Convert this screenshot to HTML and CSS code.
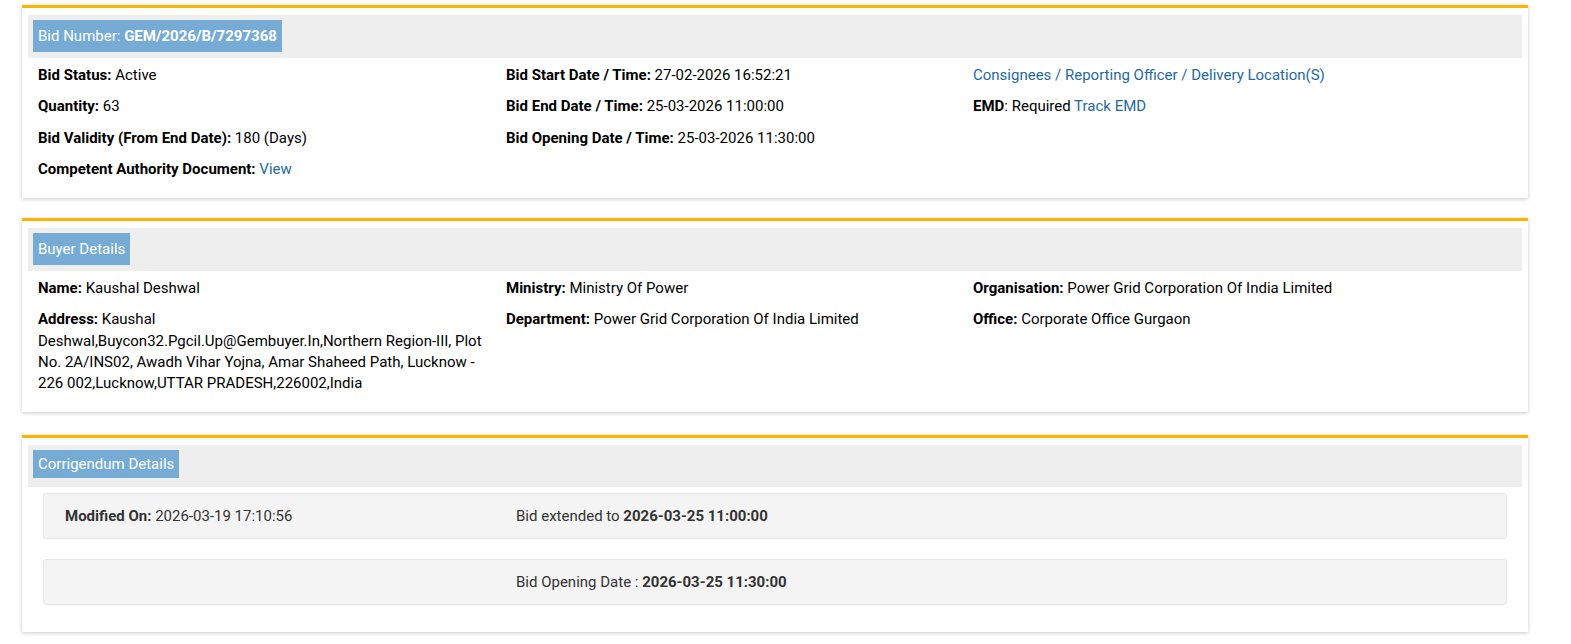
FILE: index.html
```html
<!DOCTYPE html>
<html lang="en">
<head>
    <meta charset="UTF-8">
    <meta name="viewport" content="width=device-width, initial-scale=1.0">
    <title>Bid Details</title>
    <link rel="stylesheet" href="styles.css">
</head>
<body>
<div class="page">

    <div class="card">
        <div class="card-head">
            <span class="tag">Bid Number: <b>GEM/2026/B/7297368</b></span>
        </div>
        <div class="grid">
            <div class="col">
                <div class="item"><b>Bid Status:</b> Active</div>
                <div class="item"><b>Quantity:</b> 63</div>
                <div class="item"><b>Bid Validity (From End Date):</b> 180 (Days)</div>
                <div class="item"><b>Competent Authority Document:</b> <a href="#">View</a></div>
            </div>
            <div class="col">
                <div class="item"><b>Bid Start Date / Time:</b> 27-02-2026 16:52:21</div>
                <div class="item"><b>Bid End Date / Time:</b> 25-03-2026 11:00:00</div>
                <div class="item"><b>Bid Opening Date / Time:</b> 25-03-2026 11:30:00</div>
            </div>
            <div class="col">
                <div class="item"><a href="#">Consignees / Reporting Officer / Delivery Location(S)</a></div>
                <div class="item"><b>EMD</b>: Required <a href="#">Track EMD</a></div>
            </div>
        </div>
    </div>

    <div class="card">
        <div class="card-head">
            <span class="tag">Buyer Details</span>
        </div>
        <div class="grid">
            <div class="col">
                <div class="item"><b>Name:</b> Kaushal Deshwal</div>
                <div class="item"><b>Address:</b> Kaushal Deshwal,Buycon32.Pgcil.Up@Gembuyer.In,Northern Region-III, Plot No. 2A/INS02, Awadh Vihar Yojna, Amar Shaheed Path, Lucknow - 226 002,Lucknow,UTTAR PRADESH,226002,India</div>
            </div>
            <div class="col">
                <div class="item"><b>Ministry:</b> Ministry Of Power</div>
                <div class="item"><b>Department:</b> Power Grid Corporation Of India Limited</div>
            </div>
            <div class="col">
                <div class="item"><b>Organisation:</b> Power Grid Corporation Of India Limited</div>
                <div class="item"><b>Office:</b> Corporate Office Gurgaon</div>
            </div>
        </div>
    </div>

    <div class="card last">
        <div class="card-head small">
            <span class="tag">Corrigendum Details</span>
        </div>
        <div class="wells">
            <div class="well">
                <div><b>Modified On:</b> 2026-03-19 17:10:56</div>
                <div>Bid extended to <b>2026-03-25 11:00:00</b></div>
            </div>
            <div class="well">
                <div></div>
                <div>Bid Opening Date : <b>2026-03-25 11:30:00</b></div>
            </div>
        </div>
    </div>

</div>
</body>
</html>
```

FILE: styles.css
```css
body {
    margin: 0;
    padding: 0;
    font-family: Roboto, "Liberation Sans", Arial, sans-serif;
    font-size: 15px;
    color: #000;
    background: #fff;
}

.page {
    padding: 5px 0 0 22px;
}

.card {
    width: 1506px;
    box-sizing: border-box;
    border-top: 3px solid #fbb400;
    background: #fff;
    box-shadow: 0 1px 4px rgba(0, 0, 0, 0.22);
    padding: 7px 6px 7px 6px;
    margin-bottom: 20px;
}

.card.last {
    margin-top: 23px;
    padding-bottom: 7px;
}

.card-head {
    background: #eeeeee;
    padding: 5px 5px 6px 5px;
}

.card-head.small {
    padding-bottom: 9px;
}

.tag {
    display: inline-block;
    background: #75abd4;
    color: #fff;
    padding: 5px 5px;
    line-height: 22px;
}

.card-head.small .tag {
    line-height: 18px;
}

.grid {
    display: grid;
    grid-template-columns: 468px 467px 1fr;
    padding: 7px 0 0 10px;
}

.col {
    padding-right: 14px;
}

.item {
    line-height: 1.42857;
    margin-bottom: 10px;
}

b {
    font-weight: bold;
}

a {
    color: #1f6aa1;
    text-decoration: none;
}

.wells {
    padding: 6px 15px 0 15px;
}

.well {
    display: grid;
    grid-template-columns: 451px 1fr;
    background: #f4f4f4;
    border: 1px solid #e6e6e6;
    border-radius: 3px;
    padding: 12px 21px 11px 21px;
    line-height: 21px;
    color: #333;
    margin-bottom: 20px;
}
```
